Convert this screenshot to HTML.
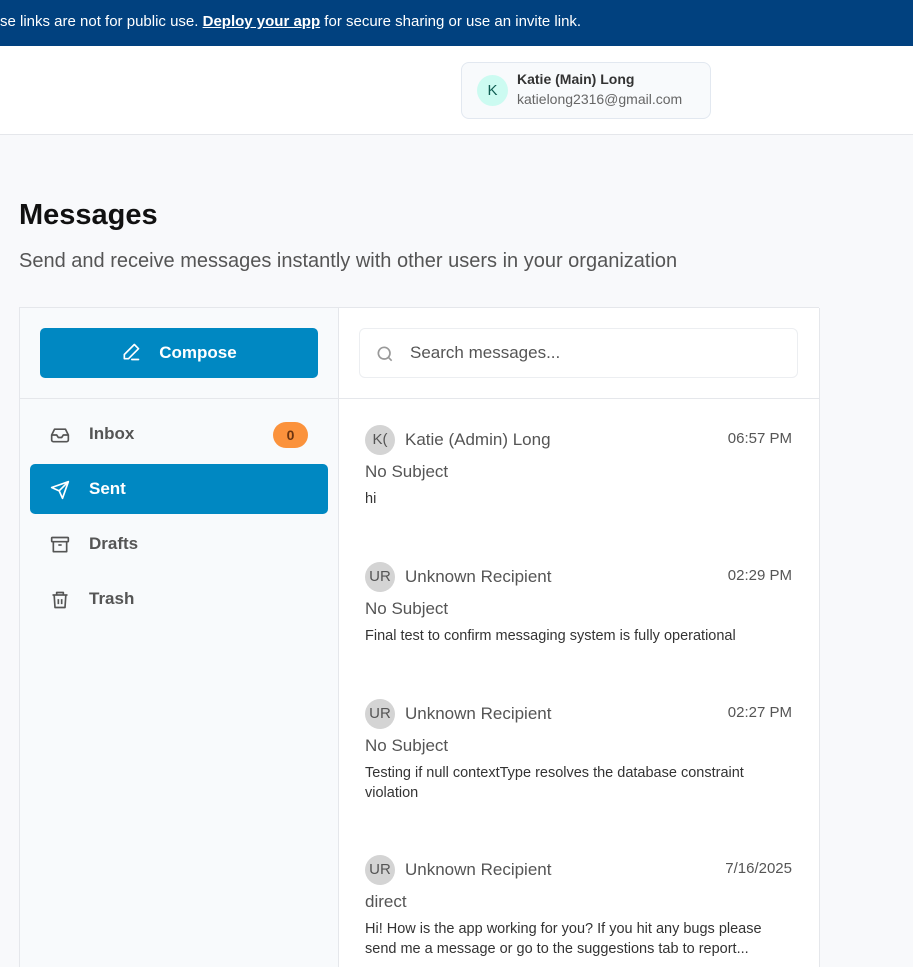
<!DOCTYPE html>
<html><head><style>
*{box-sizing:border-box;margin:0;padding:0}
body{width:913px;height:953px;overflow:hidden;background:#f8f9fb;font-family:"Liberation Sans",sans-serif;position:relative;color:#333}
.banner{position:absolute;left:0;top:0;width:913px;height:46px;background:#01417f;color:#fff;font-size:15px;line-height:44px;padding-left:0;white-space:nowrap;box-shadow:0 2px 4px rgba(0,0,0,.15)}
.banner a{color:#fff;font-weight:bold;text-decoration:underline}
.header{position:absolute;left:0;top:46px;width:913px;height:89px;background:#fff;border-bottom:1px solid #e5e7eb}
.user{position:absolute;left:461px;top:16px;width:250px;height:57px;border:1px solid #e2e8f0;border-radius:8px;background:#f8fafc}
.user .av{position:absolute;left:15px;top:12px;width:31px;height:31px;border-radius:50%;background:#ccfbf1;color:#0f5d52;font-size:15px;text-align:center;line-height:31px}
.user .n{position:absolute;left:55px;top:8px;font-size:14px;font-weight:bold;color:#333}
.user .e{position:absolute;left:55px;top:28px;font-size:14px;color:#666}
h1{position:absolute;left:19px;top:199px;font-size:29px;font-weight:bold;color:#111}
.sub{position:absolute;left:19px;top:250px;font-size:20px;color:#555}
.card{position:absolute;left:19px;top:307px;width:800px;height:660px;border-top:1px solid #e5e7eb;border-left:1px solid #e5e7eb}
.side{position:absolute;left:0;top:0;width:319px;height:100%;background:#f8fafc;border-right:1px solid #e5e7eb}
.list{position:absolute;left:319px;top:0;width:481px;height:100%;background:#fff;border-right:1px solid #e5e7eb}
.compose{position:absolute;left:20px;top:20px;width:278px;height:50px;background:#0088c2;border-radius:5px;color:#fff;font-weight:bold;font-size:17px;line-height:50px;text-align:center}
.compose svg{vertical-align:middle;margin-right:18px;margin-top:-4px}
.sep{position:absolute;left:0;top:90px;width:100%;height:1px;background:#e5e7eb}
.nav{position:absolute;left:10px;width:298px;height:50px;border-radius:5px;font-size:17px;font-weight:bold;color:#555;line-height:50px;padding-left:59px}
.nav svg{position:absolute;left:20px;top:16px}
.nav.act{background:#0088c2;color:#fff}
.badge{position:absolute;right:20px;top:13px;width:35px;height:26px;background:#fb923c;border-radius:13px;color:#6b3410;font-size:14px;line-height:26px;text-align:center}
.search{position:absolute;left:20px;top:20px;width:439px;height:50px;border:1px solid #eceef1;border-radius:6px;font-size:17px;color:#555;line-height:48px;padding-left:50px}
.search svg{position:absolute;left:15px;top:15px}
.msg{position:absolute;left:26px;width:428px}
.msg .av{position:absolute;left:0;top:0;width:30px;height:30px;border-radius:50%;background:#d4d4d4;color:#555;font-size:15px;line-height:30px;text-align:center}
.msg .nm{position:absolute;left:40px;top:5px;font-size:17px;color:#555}
.msg .tm{position:absolute;right:1px;top:5px;font-size:15px;color:#555}
.msg .sj{position:absolute;left:0;top:37px;font-size:17px;color:#555}
.msg .pv{position:absolute;left:0;top:64px;font-size:14.5px;color:#333;line-height:20px;width:420px}
</style></head><body>
<div class="banner">se links are not for public use. <a>Deploy your app</a> for secure sharing or use an invite link.</div>
<div class="header"><div class="user"><div class="av">K</div><div class="n">Katie (Main) Long</div><div class="e">katielong2316@gmail.com</div></div></div>
<h1>Messages</h1>
<div class="sub">Send and receive messages instantly with other users in your organization</div>
<div class="card">
<div class="side">
<div class="compose"><svg width="20" height="20" viewBox="0 0 24 24" fill="none" stroke="#fff" stroke-width="2" stroke-linecap="round" stroke-linejoin="round"><path d="M16 3l5 5L9 20H4v-5z"/><path d="M13 21h8"/></svg>Compose</div>
<div class="sep"></div>
<div class="nav" style="top:101px"><svg width="20" height="20" viewBox="0 0 24 24" fill="none" stroke="#555" stroke-width="2" stroke-linejoin="round"><path d="M2 12h6l2 3h4l2-3h6"/><path d="M5.5 5h13L22 12v6a2 2 0 0 1-2 2H4a2 2 0 0 1-2-2v-6z"/></svg>Inbox<div class="badge">0</div></div>
<div class="nav act" style="top:156px"><svg width="20" height="20" viewBox="0 0 24 24" fill="none" stroke="#fff" stroke-width="2" stroke-linejoin="round"><path d="M22 2L11 13"/><path d="M22 2l-7 20-4-9-9-4z"/></svg>Sent</div>
<div class="nav" style="top:211px"><svg width="20" height="20" viewBox="0 0 24 24" fill="none" stroke="#555" stroke-width="2" stroke-linejoin="round"><rect x="2" y="3" width="20" height="5" rx="1"/><path d="M4 8v12h16V8"/><path d="M10 12h4"/></svg>Drafts</div>
<div class="nav" style="top:266px"><svg width="20" height="20" viewBox="0 0 24 24" fill="none" stroke="#555" stroke-width="2" stroke-linejoin="round"><path d="M3 6h18"/><path d="M8 6V3h8v3"/><path d="M5 6l1 15h12l1-15"/><path d="M10 11v6M14 11v6"/></svg>Trash</div>
</div>
<div class="list">
<div class="search"><svg width="20" height="20" viewBox="0 0 24 24" fill="none" stroke="#999" stroke-width="2"><circle cx="11" cy="11" r="7"/><path d="M20 20l-4-4"/></svg>Search messages...</div>
<div class="sep"></div>
<div class="msg" style="top:117px"><div class="av">K(</div><div class="nm">Katie (Admin) Long</div><div class="tm">06:57 PM</div><div class="sj">No Subject</div><div class="pv">hi</div></div>
<div class="msg" style="top:254px"><div class="av">UR</div><div class="nm">Unknown Recipient</div><div class="tm">02:29 PM</div><div class="sj">No Subject</div><div class="pv">Final test to confirm messaging system is fully operational</div></div>
<div class="msg" style="top:391px"><div class="av">UR</div><div class="nm">Unknown Recipient</div><div class="tm">02:27 PM</div><div class="sj">No Subject</div><div class="pv">Testing if null contextType resolves the database constraint violation</div></div>
<div class="msg" style="top:547px"><div class="av">UR</div><div class="nm">Unknown Recipient</div><div class="tm">7/16/2025</div><div class="sj">direct</div><div class="pv">Hi! How is the app working for you? If you hit any bugs please send me a message or go to the suggestions tab to report...</div></div>
</div>
</div>
</body></html>
